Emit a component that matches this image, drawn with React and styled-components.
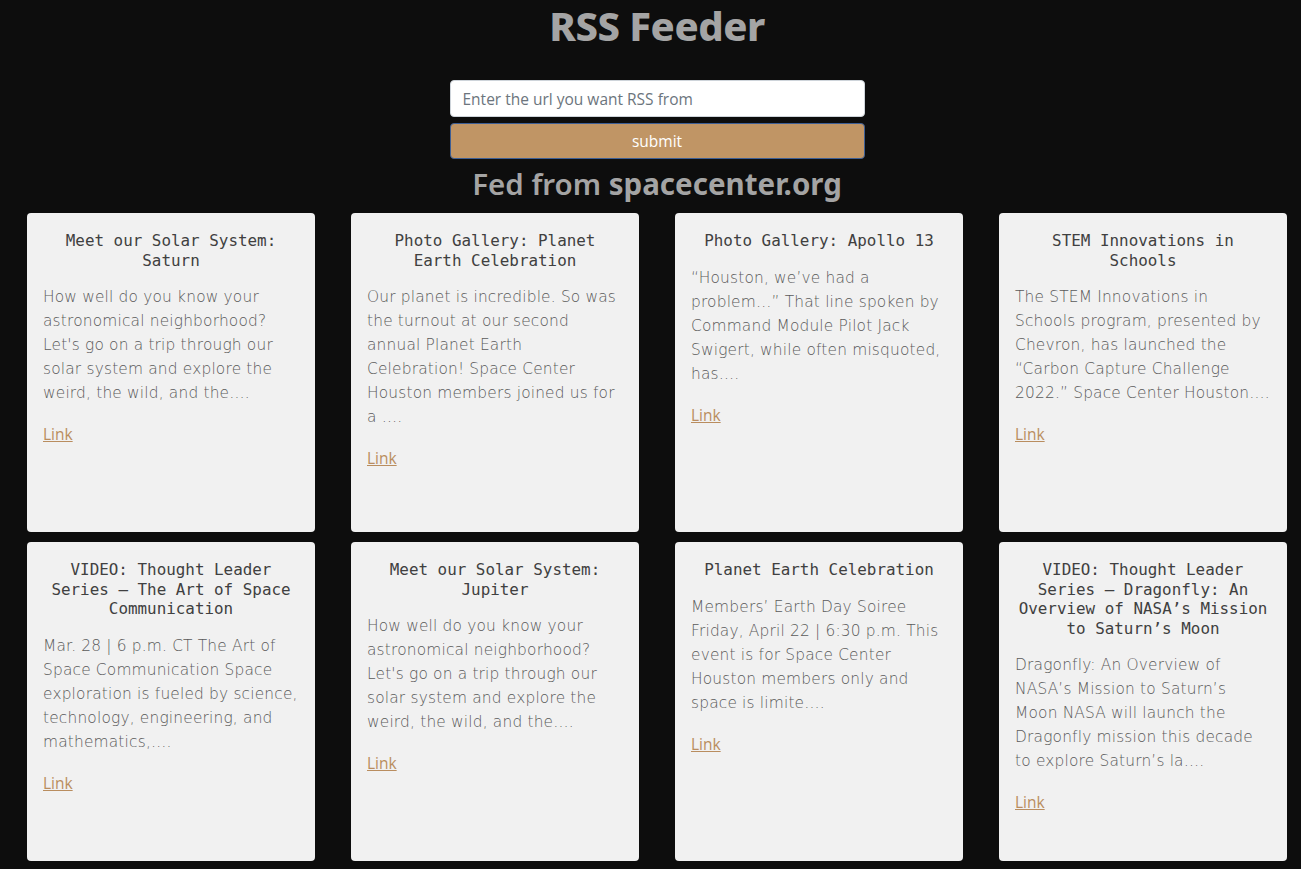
import React from 'react';
import styled, { createGlobalStyle } from 'styled-components';

const GlobalStyle = createGlobalStyle`
  html, body {
    margin: 0;
    padding: 0;
    background: #0d0d0d;
  }
  body {
    font-family: "Open Sans", "Noto Sans", sans-serif;
  }
`;

const Page = styled.div`
  min-height: 100vh;
  box-sizing: border-box;
  padding-left: 13px;
  background: #0d0d0d;
  display: flex;
  flex-direction: column;
  align-items: center;
`;

const Title = styled.h1`
  margin: 0;
  padding-top: 4px;
  font-family: "Noto Sans", "Open Sans", sans-serif;
  font-weight: 800;
  font-size: 40px;
  line-height: 44px;
  letter-spacing: -0.5px;
  color: #a4a4a4;
`;

const Form = styled.form`
  margin-top: 32px;
  width: 415px;
  display: flex;
  flex-direction: column;
  gap: 6px;
`;

const Input = styled.input`
  box-sizing: border-box;
  height: 37px;
  width: 100%;
  padding: 0 12px;
  border: 1px solid #ced4da;
  border-radius: 4px;
  background: #fff;
  font-family: "Open Sans", "Noto Sans", sans-serif;
  font-size: 15.5px;
  color: #333;
  outline: none;

  &::placeholder {
    color: #6c757d;
  }
`;

const Button = styled.button`
  box-sizing: border-box;
  height: 36px;
  width: 100%;
  border: 1px solid #3d5e94;
  border-radius: 4px;
  background: #c09565;
  color: #fff;
  font-family: "Open Sans", "Noto Sans", sans-serif;
  font-size: 15.5px;
  cursor: pointer;
`;

const Source = styled.h2`
  margin: 6px 0 10px;
  font-family: "Noto Sans", "Open Sans", sans-serif;
  font-size: 29.5px;
  line-height: 38px;
  font-weight: 600;
  color: #a4a4a4;

  b {
    font-weight: 700;
  }
`;

const Grid = styled.div`
  align-self: stretch;
  box-sizing: border-box;
  padding: 0 14px 20px 14px;
  display: grid;
  grid-template-columns: repeat(4, 288px);
  column-gap: 36px;
  row-gap: 10px;
`;

const Card = styled.article`
  box-sizing: border-box;
  height: 319px;
  padding: 18px 16px 16px;
  background: #f1f1f1;
  border-radius: 4px;
  overflow: hidden;
`;

const CardTitle = styled.h3`
  margin: 0 0 15px;
  text-align: center;
  font-family: "DejaVu Sans Mono", "Liberation Mono", monospace;
  font-weight: 400;
  font-size: 15.9px;
  line-height: 19.5px;
  color: #404040;
`;

const Summary = styled.p`
  margin: 0 0 17px;
  font-family: "DejaVu Sans", "Open Sans", sans-serif;
  font-weight: 200;
  font-size: 15.4px;
  line-height: 24px;
  letter-spacing: 0.18px;
  color: #5a5a5a;
`;

const ItemLink = styled.a`
  font-family: "Open Sans", "Noto Sans", sans-serif;
  font-size: 15.5px;
  line-height: 24px;
  color: #b98d5f;
  text-decoration: underline;
`;

const items = [
  {
    title: 'Meet our Solar System: Saturn',
    text: "How well do you know your astronomical neighborhood? Let's go on a trip through our solar system and explore the weird, the wild, and the….",
  },
  {
    title: 'Photo Gallery: Planet Earth Celebration',
    text: 'Our planet is incredible. So was the turnout at our second annual Planet Earth Celebration! Space Center Houston members joined us for a ….',
  },
  {
    title: 'Photo Gallery: Apollo 13',
    text: '“Houston, we’ve had a problem…” That line spoken by Command Module Pilot Jack Swigert, while often misquoted, has….',
  },
  {
    title: 'STEM Innovations in Schools',
    text: 'The STEM Innovations in Schools program, presented by Chevron, has launched the “Carbon Capture Challenge 2022.” Space Center Houston….',
  },
  {
    title: 'VIDEO: Thought Leader Series – The Art of Space Communication',
    text: 'Mar. 28 | 6 p.m. CT The Art of Space Communication Space exploration is fueled by science, technology, engineering, and mathematics,….',
  },
  {
    title: 'Meet our Solar System: Jupiter',
    text: "How well do you know your astronomical neighborhood? Let's go on a trip through our solar system and explore the weird, the wild, and the….",
  },
  {
    title: 'Planet Earth Celebration',
    text: 'Members’ Earth Day Soiree Friday, April 22 | 6:30 p.m. This event is for Space Center Houston members only and space is limite….',
  },
  {
    title: 'VIDEO: Thought Leader Series – Dragonfly: An Overview of NASA’s Mission to Saturn’s Moon',
    text: 'Dragonfly: An Overview of NASA’s Mission to Saturn’s Moon NASA will launch the Dragonfly mission this decade to explore Saturn’s la….',
  },
];

export default function App() {
  return (
    <Page>
      <GlobalStyle />
      <Title>RSS Feeder</Title>
      <Form onSubmit={(e) => e.preventDefault()}>
        <Input placeholder="Enter the url you want RSS from" />
        <Button type="submit">submit</Button>
      </Form>
      <Source>
        Fed from <b>spacecenter.org</b>
      </Source>
      <Grid>
        {items.map((item) => (
          <Card key={item.title}>
            <CardTitle>{item.title}</CardTitle>
            <Summary>{item.text}</Summary>
            <ItemLink href="#">Link</ItemLink>
          </Card>
        ))}
      </Grid>
    </Page>
  );
}
